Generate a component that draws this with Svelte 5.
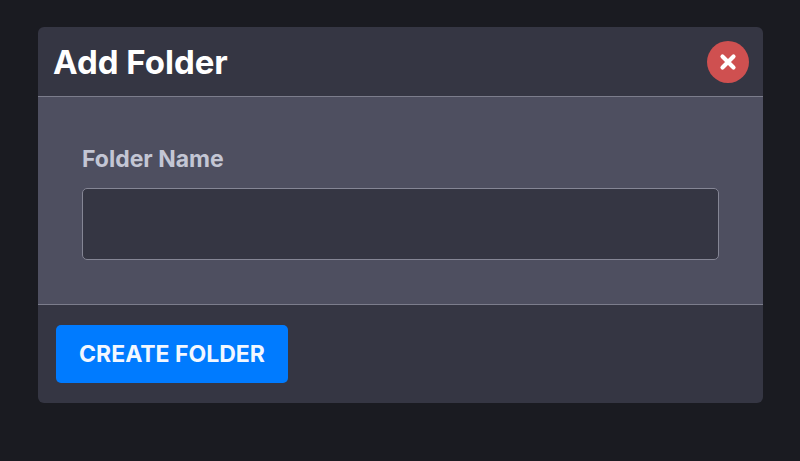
<script>
  let name = $state('');
</script>

<div class="page">
  <div class="modal">
    <header class="modal-header">
      <h2>Add Folder</h2>
      <button class="close" aria-label="Close">
        <svg viewBox="0 0 20 20" width="20" height="20">
          <path d="M4.5 4.5 L15.5 15.5 M15.5 4.5 L4.5 15.5" stroke="#fff" stroke-width="4.2" stroke-linecap="round" fill="none" />
        </svg>
      </button>
    </header>
    <div class="modal-body">
      <label for="folder-name">Folder Name</label>
      <input id="folder-name" type="text" bind:value={name} />
    </div>
    <footer class="modal-footer">
      <button class="create">CREATE FOLDER</button>
    </footer>
  </div>
</div>

<style>
  :global(body) {
    margin: 0;
    background: #1a1b21;
  }

  .page {
    height: 461px;
    padding: 27px 37px 0 38px;
    box-sizing: border-box;
    font-family: Inter, "Liberation Sans", sans-serif;
  }

  .modal {
    height: 376px;
    background: #353643;
    border-radius: 6px;
    overflow: hidden;
    display: flex;
    flex-direction: column;
  }

  .modal-header {
    height: 70px;
    flex: none;
    box-sizing: border-box;
    border-bottom: 1px solid #7c7d8c;
    padding: 0 14px 0 15px;
    display: flex;
    align-items: center;
    justify-content: space-between;
  }

  h2 {
    margin: 0;
    color: #fff;
    font-size: 33px;
    font-weight: 700;
  }

  .close {
    width: 42px;
    height: 42px;
    border: none;
    border-radius: 50%;
    padding: 0;
    background: #cf5050;
    display: flex;
    align-items: center;
    justify-content: center;
  }

  .modal-body {
    flex: 1;
    background: #4e4f60;
    padding: 49px 44px 0;
    display: flex;
    flex-direction: column;
  }

  label {
    color: #c3c6d4;
    font-size: 23px;
    font-weight: 700;
    line-height: 26px;
    margin-bottom: 16px;
  }

  input {
    height: 72px;
    box-sizing: border-box;
    background: #353643;
    border: 1px solid #858695;
    border-radius: 5px;
    outline: none;
    color: #fff;
  }

  .modal-footer {
    height: 99px;
    flex: none;
    box-sizing: border-box;
    border-top: 1px solid #7c7d8c;
    padding: 20px 18px 0;
  }

  .create {
    width: 232px;
    height: 58px;
    border: none;
    border-radius: 5px;
    background: #007bff;
    color: #f2f7ff;
    font-family: inherit;
    font-size: 23px;
    font-weight: 700;
  }
</style>
